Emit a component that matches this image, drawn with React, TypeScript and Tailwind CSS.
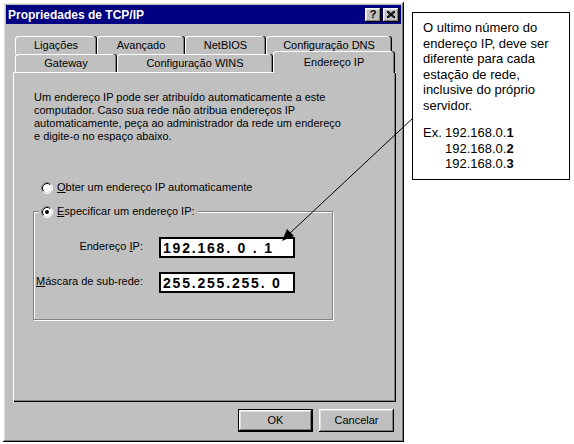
import React from 'react';

const raised = 'shadow-[inset_-1px_-1px_0_#000,inset_1px_1px_0_#fff,inset_-2px_-2px_0_#808080,inset_2px_2px_0_#dfdfdf]';
const tabShadow = 'shadow-[inset_-1px_0_0_#000,inset_-2px_0_0_#808080,inset_1px_1px_0_#fff]';

function Radio({ checked }: { checked?: boolean }) {
  return (
    <svg width="12" height="12" viewBox="0 0 12 12" className="shrink-0">
      <circle cx="6" cy="6" r="5" fill="#fff" />
      <path d="M2.11 9.89 A5.5 5.5 0 0 1 9.89 2.11" fill="none" stroke="#808080" />
      <path d="M9.89 2.11 A5.5 5.5 0 0 1 2.11 9.89" fill="none" stroke="#fff" />
      <path d="M2.82 9.18 A4.5 4.5 0 0 1 9.18 2.82" fill="none" stroke="#000" />
      <path d="M9.18 2.82 A4.5 4.5 0 0 1 2.82 9.18" fill="none" stroke="#dfdfdf" />
      {checked ? <circle cx="6" cy="6" r="2" fill="#000" /> : null}
    </svg>
  );
}

function Tab({ label, w }: { label: string; w: number }) {
  return (
    <div
      style={{ width: w }}
      className={`flex h-[18px] items-center justify-center rounded-t-[3px] bg-[#c0c0c0] pt-[1px] ${tabShadow}`}
    >
      {label}
    </div>
  );
}

function IpField({ value }: { value: string }) {
  return (
    <div className="flex h-[21px] w-[136px] items-center border-2 border-black bg-white pl-[2px]">
      <span className="whitespace-pre text-[14px] font-bold leading-none tracking-[1.8px]">{value}</span>
    </div>
  );
}

export default function App() {
  return (
    <div
      className="relative h-[444px] w-[574px] overflow-hidden bg-white text-black"
      style={{ fontFamily: '"Liberation Sans", Arial, sans-serif' }}
    >
      <div className="flex items-start">
        {/* dialog */}
        <div className={`ml-[3px] mt-[2px] flex h-[440px] w-[401px] flex-col bg-[#c0c0c0] p-[3px] ${raised}`}>
          <div className="flex h-[19px] items-center justify-between bg-[#000080] pl-[2px] pr-[2px]">
            <span className="text-[12px] font-bold text-white">Propriedades de TCP/IP</span>
            <div className="flex gap-[2px]">
              <div className={`flex h-[14px] w-[16px] items-center justify-center bg-[#c0c0c0] text-[11px] font-bold leading-none ${raised}`}>
                ?
              </div>
              <div className={`flex h-[14px] w-[16px] items-center justify-center bg-[#c0c0c0] ${raised}`}>
                <svg width="8" height="7" viewBox="0 0 8 7">
                  <path d="M0 0 L8 7 M1 0 L8 6 M0 1 L7 7 M8 0 L0 7 M7 0 L0 6 M8 1 L1 7" stroke="#000" strokeWidth="1" />
                </svg>
              </div>
            </div>
          </div>

          {/* tabs */}
          <div className="ml-[9px] mt-[12px] text-[11px]">
            <div className="flex">
              <Tab label="Ligações" w={82} />
              <Tab label="Avançado" w={88} />
              <Tab label="NetBIOS" w={81} />
              <Tab label="Configuração DNS" w={126} />
            </div>
            <div className="flex h-[18px] items-end">
              <Tab label="Gateway" w={102} />
              <Tab label="Configuração WINS" w={156} />
              <div
                className={`relative z-10 -mb-[1px] flex h-[22px] w-[122px] items-start justify-center rounded-t-[3px] bg-[#c0c0c0] pt-[3px] ${tabShadow}`}
              >
                Endereço IP
              </div>
            </div>
          </div>

          {/* panel */}
          <div
            className="ml-[7px] h-[330px] w-[383px] bg-[#c0c0c0] pl-[21px] pt-[19px] text-[11px] leading-[13px] shadow-[inset_1px_1px_0_#fff,inset_-1px_-1px_0_#000,inset_-2px_-2px_0_#808080]"
          >
            <p>
              Um endereço IP pode ser atribuído automaticamente a este
              <br />
              computador. Caso sua rede não atribua endereços IP
              <br />
              automaticamente, peça ao administrador da rede um endereço
              <br />e digite-o no espaço abaixo.
            </p>

            <div className="ml-[7px] mt-[38px] flex h-[13px] items-center gap-[4px]">
              <Radio />
              <span>
                <span className="underline">O</span>bter um endereço IP automaticamente
              </span>
            </div>

            <div className="-ml-[1px] mt-[17px] h-[109px] w-[300px] border border-[#808080] shadow-[inset_1px_1px_0_#fff,1px_1px_0_#fff]">
              <div className="-mt-[7px] ml-[5px] flex h-[13px] w-fit items-center gap-[4px] bg-[#c0c0c0] px-[2px]">
                <Radio checked />
                <span className="pr-[1px]">
                  <span className="underline">E</span>specificar um endereço IP:
                </span>
              </div>

              <div className="mt-[19px] flex items-center">
                <div className="w-[109px] pb-[3px] text-right">
                  Endereço <span className="underline">I</span>P:
                </div>
                <div className="ml-[16px]">
                  <IpField value="192.168. 0 . 1" />
                </div>
              </div>
              <div className="mt-[14px] flex items-center">
                <div className="w-[109px] pb-[3px] text-right">
                  <span className="underline">M</span>áscara de sub-rede:
                </div>
                <div className="ml-[16px]">
                  <IpField value="255.255.255. 0" />
                </div>
              </div>
            </div>
          </div>

          {/* buttons */}
          <div className="mt-[7px] flex justify-end gap-[6px] pr-[7px] text-[11px]">
            <div className="h-[23px] w-[75px] border border-black">
              <div className={`flex h-full w-full items-center justify-center bg-[#c0c0c0] ${raised}`}>OK</div>
            </div>
            <div className={`flex h-[23px] w-[75px] items-center justify-center bg-[#c0c0c0] ${raised}`}>Cancelar</div>
          </div>
        </div>

        {/* note */}
        <div className="ml-[8px] mt-[12px] h-[168px] w-[158px] border border-black pl-[10px] pt-[7px] text-[13px] leading-[15.5px]">
          <p>
            O ultimo número do
            <br />
            endereço IP, deve ser
            <br />
            diferente para cada
            <br />
            estação de rede,
            <br />
            inclusive do próprio
            <br />
            servidor.
          </p>
          <div className="mt-[12px] flex">
            <span className="w-[22px]">Ex.</span>
            <div>
              <div>
                192.168.0.<b>1</b>
              </div>
              <div>
                192.168.0.<b>2</b>
              </div>
              <div>
                192.168.0.<b>3</b>
              </div>
            </div>
          </div>
        </div>
      </div>

      {/* arrow from note to IP field */}
      <svg className="pointer-events-none absolute left-0 top-0" width="574" height="444">
        <line x1="413" y1="118" x2="289" y2="234" stroke="#000" strokeWidth="1" />
        <polygon points="282,241 294,236 287,229" fill="#000" />
      </svg>
    </div>
  );
}
